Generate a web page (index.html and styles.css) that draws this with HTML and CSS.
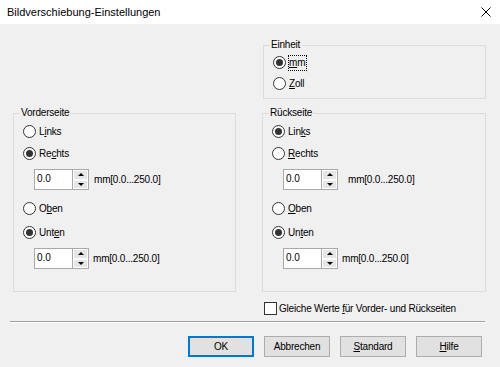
FILE: index.html
```html
<!DOCTYPE html>
<html lang="de">
  <head>
    <meta charset="UTF-8" />
    <title>Bildverschiebung-Einstellungen</title>
    <link rel="stylesheet" href="styles.css">
  </head>
  <body>
    <div class="titlebar">
      <span class="title">Bildverschiebung-Einstellungen</span>
      <svg class="close" width="10" height="10" viewBox="0 0 10 10">
        <path d="M0.5 0.5 L9.5 9.5 M9.5 0.5 L0.5 9.5" stroke="#000" stroke-width="1" fill="none" />
      </svg>
    </div>

    <div class="content">
      <div class="columns">
        <fieldset class="group group-unit">
          <legend>Einheit</legend>
          <div class="option">
            <span class="radio checked"></span>
            <span class="focus"><u>m</u>m</span>
          </div>
          <div class="option">
            <span class="radio"></span>
            <span><u>Z</u>oll</span>
          </div>
        </fieldset>
      </div>

      <div class="columns sides">
        <fieldset class="group">
          <legend>Vorderseite</legend>
          <div class="option">
            <span class="radio"></span>
            <span>L<u>i</u>nks</span>
          </div>
          <div class="option">
            <span class="radio checked"></span>
            <span>Re<u>c</u>hts</span>
          </div>
          <div class="spin-row">
            <div class="spin">
              <span class="spin-value">0.0</span>
              <span class="spin-buttons">
                <span class="spin-up"></span>
                <span class="spin-down"></span>
              </span>
            </div>
            <span class="range">mm[0.0...250.0]</span>
          </div>
          <div class="option option-gap">
            <span class="radio"></span>
            <span>O<u>b</u>en</span>
          </div>
          <div class="option option-tight">
            <span class="radio checked"></span>
            <span>Unt<u>e</u>n</span>
          </div>
          <div class="spin-row spin-last">
            <div class="spin">
              <span class="spin-value">0.0</span>
              <span class="spin-buttons">
                <span class="spin-up"></span>
                <span class="spin-down"></span>
              </span>
            </div>
            <span class="range range-near">mm[0.0...250.0]</span>
          </div>
        </fieldset>

        <fieldset class="group">
          <legend>Rückseite</legend>
          <div class="option">
            <span class="radio checked"></span>
            <span>Lin<u>k</u>s</span>
          </div>
          <div class="option">
            <span class="radio"></span>
            <span><u>R</u>echts</span>
          </div>
          <div class="spin-row">
            <div class="spin">
              <span class="spin-value">0.0</span>
              <span class="spin-buttons">
                <span class="spin-up"></span>
                <span class="spin-down"></span>
              </span>
            </div>
            <span class="range range-far">mm[0.0...250.0]</span>
          </div>
          <div class="option option-gap">
            <span class="radio"></span>
            <span><u>O</u>ben</span>
          </div>
          <div class="option option-tight">
            <span class="radio checked"></span>
            <span>Un<u>t</u>en</span>
          </div>
          <div class="spin-row spin-last">
            <div class="spin">
              <span class="spin-value">0.0</span>
              <span class="spin-buttons">
                <span class="spin-up"></span>
                <span class="spin-down"></span>
              </span>
            </div>
            <span class="range range-near">mm[0.0...250.0]</span>
          </div>
        </fieldset>
      </div>

      <div class="columns">
        <div class="same-values">
          <span class="check"></span>
          <span>Gleiche Werte <u>f</u>ür Vorder- und Rückseiten</span>
        </div>
      </div>

      <div class="separator"></div>

      <div class="buttons">
        <button class="btn btn-default">OK</button>
        <button class="btn">Abbrechen</button>
        <button class="btn"><u>S</u>tandard</button>
        <button class="btn"><u>H</u>ilfe</button>
      </div>
    </div>
  </body>
</html>
```

FILE: styles.css
```css
body {
  margin: 0;
  font-family: "Liberation Sans", Arial, sans-serif;
  font-size: 10px;
  letter-spacing: -0.2px;
  color: #000;
  background-color: #f0f0f0;
}
u {
  text-decoration-thickness: 1px;
  text-underline-offset: 1px;
}
.titlebar {
  height: 24px;
  background-color: #fff;
  display: flex;
  align-items: center;
  justify-content: space-between;
  padding: 0 9px 0 7px;
  font-size: 11px;
  letter-spacing: 0;
}
.close {
  display: block;
}
.content {
  padding: 14px 15px 0 13px;
}
.columns {
  display: grid;
  grid-template-columns: 223px 224px;
  column-gap: 26px;
}
.sides {
  margin-top: 7px;
}
.group {
  margin: 0;
  padding: 0 8px 22px 8px;
  border: 1px solid #dcdcdc;
  min-width: 0;
}
.group legend {
  padding: 0 1px;
  margin-left: -2px;
  line-height: 14px;
}
.group-unit {
  grid-column: 2;
  margin-left: 1px;
  padding-bottom: 4px;
}
.group-unit .option {
  height: 21px;
}
.option {
  display: flex;
  align-items: center;
  gap: 3px;
  height: 22px;
}
.option-gap {
  margin-top: 7px;
}
.option-tight {
  margin-top: 2px;
}
.radio {
  position: relative;
  width: 11px;
  height: 11px;
  margin-left: 1px;
  border: 1px solid #333;
  border-radius: 50%;
  background-color: #fff;
}
.radio.checked::after {
  content: "";
  position: absolute;
  left: 2px;
  top: 2px;
  width: 7px;
  height: 7px;
  border-radius: 50%;
  background-color: #333;
}
.focus {
  outline: 1px dotted #000;
  padding: 1px 1px 2px 0;
}
.spin-row {
  display: flex;
  align-items: center;
  margin: 5px 0 0 12px;
  height: 21px;
}
.spin-last {
  margin-top: 5px;
}
.spin {
  display: flex;
  width: 53px;
  height: 19px;
  border: 1px solid #a9a9a9;
  background-color: #fff;
}
.spin-value {
  flex: 1;
  padding: 3px 0 0 2px;
  letter-spacing: 0;
}
.spin-buttons {
  display: flex;
  flex-direction: column;
  width: 15px;
  border-left: 1px solid #a9a9a9;
}
.spin-up,
.spin-down {
  flex: 1;
  position: relative;
  background-color: #e6e6e6;
  border: 1px solid #fff;
}
.spin-up::after,
.spin-down::after {
  content: "";
  position: absolute;
  left: 4px;
  top: 2px;
  border-left: 3px solid transparent;
  border-right: 3px solid transparent;
}
.spin-up::after {
  border-bottom: 3px solid #000;
}
.spin-down::after {
  border-top: 3px solid #000;
}
.range {
  margin-left: 5px;
}
.range-near {
  margin-left: 4px;
}
.range-far {
  margin-left: 10px;
}
.same-values {
  grid-column: 2;
  display: flex;
  align-items: center;
  gap: 2px;
  height: 17px;
  margin: 8px 0 0 2px;
}
.check {
  width: 11px;
  height: 11px;
  border: 1px solid #333;
  background-color: #fff;
}
.separator {
  margin: 4px 0 0 -3px;
  border-top: 1px solid #a0a0a0;
  border-bottom: 1px solid #fff;
}
.buttons {
  display: flex;
  justify-content: flex-end;
  gap: 10px;
  margin: 13px 3px 0 0;
}
.btn {
  width: 66px;
  height: 21px;
  padding: 0;
  font-family: inherit;
  font-size: 10px;
  letter-spacing: -0.2px;
  color: #000;
  background-color: #e1e1e1;
  border: 1px solid #adadad;
}
.btn-default {
  border: 2px solid #0078d7;
}
```
